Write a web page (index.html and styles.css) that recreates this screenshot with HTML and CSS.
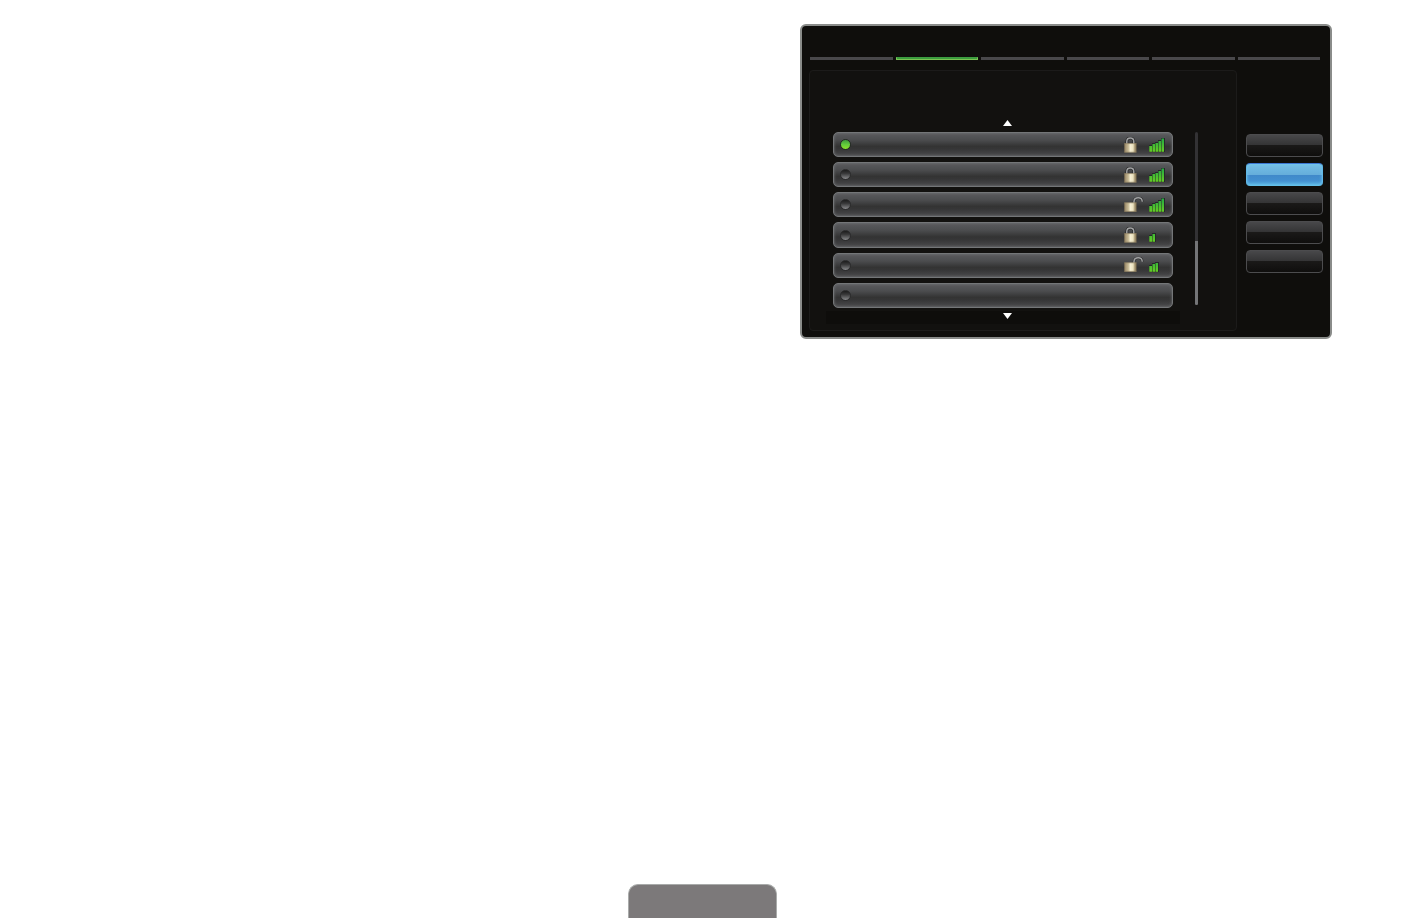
FILE: index.html
```html
<!DOCTYPE html>
<html lang="en">
<head>
  <meta charset="UTF-8">
  <title>Wireless Network</title>
  <link rel="stylesheet" href="styles.css">
</head>
<body>
  <!-- shared icon parts -->
  <svg class="defs" width="0" height="0" aria-hidden="true">
    <defs>
      <linearGradient id="brass" x1="0" x2="1" y1="0" y2="0">
        <stop offset="0" stop-color="#8d7c5c"/>
        <stop offset="0.2" stop-color="#b5a684"/>
        <stop offset="0.32" stop-color="#c4b792"/>
        <stop offset="0.5" stop-color="#f6efd4"/>
        <stop offset="0.72" stop-color="#ece3c0"/>
        <stop offset="0.87" stop-color="#a3936f"/>
        <stop offset="1" stop-color="#837353"/>
      </linearGradient>
      <linearGradient id="green" x1="0" x2="0" y1="0" y2="14" gradientUnits="userSpaceOnUse">
        <stop offset="0" stop-color="#22a843"/>
        <stop offset="1" stop-color="#66cf24"/>
      </linearGradient>
    </defs>
    <symbol id="locked" viewBox="0 0 20 16">
      <path d="M2.8 7V4.6C2.8 2 4.3 1 6.3 1s3.5 1 3.5 3.6V7" fill="none" stroke="#222" stroke-width="2.6"/>
      <path d="M2.8 7V4.6C2.8 2 4.3 1 6.3 1s3.5 1 3.5 3.6V7" fill="none" stroke="#a2a3a4" stroke-width="1.5"/>
      <rect x="0.3" y="6.4" width="12.2" height="9" fill="url(#brass)"/>
      <path d="M0.3 6.6h12.2M0.3 15.2h12.2" stroke="#8f8060" stroke-width="0.6"/>
    </symbol>
    <symbol id="unlocked" viewBox="0 0 20 16">
      <path d="M10 6V4.2C10.2 1.8 12 .8 14.2.8c2.4 0 4 1.400 4 4" fill="none" stroke="#222" stroke-width="2.4"/>
      <path d="M10 6V4.2C10.2 1.8 12 .8 14.2.8c2.4 0 4 1.400 4 4" fill="none" stroke="#a2a3a4" stroke-width="1.5"/>
      <rect x="0.3" y="5.6" width="12.2" height="9" fill="url(#brass)"/>
      <path d="M0.3 5.8h12.2M0.3 14.4h12.2" stroke="#8f8060" stroke-width="0.6"/>
    </symbol>
    <symbol id="signal2" viewBox="0 0 16 14">
      <path d="M0 7h3V5h4v9H0z" fill="#26272a"/>
      <path d="M.3 8H3v5.700H.3zM3.500 6H6v7.700H3.500z" fill="url(#green)"/>
    </symbol>
    <symbol id="signal3" viewBox="0 0 16 14">
      <path d="M0 7h3V5h3V4h4v10H0z" fill="#26272a"/>
      <path d="M.3 8H3v5.700H.3zM3.500 6H6v7.700H3.500zM6.500 5H9v8.700H6.500z" fill="url(#green)"/>
    </symbol>
    <symbol id="signal5" viewBox="0 0 16 14">
      <path d="M0 7h3V5h3V4h3V2h3V0h4v14H0z" fill="#26272a"/>
      <path d="M.3 8H3v5.700H.3zM3.500 6H6v7.700H3.500zM6.500 5H9v8.700H6.500zM9.500 3H12v10.700H9.500zM12.500.5H15v13.200h-2.500z" fill="url(#green)"/>
    </symbol>
  </svg>

  <div class="page">
    <section class="screen" aria-label="Network settings">
      <nav class="tabs">
        <a href="#" aria-label="Tab 1"></a>
        <a href="#" class="active" aria-label="Tab 2"></a>
        <a href="#" aria-label="Tab 3"></a>
        <a href="#" aria-label="Tab 4"></a>
        <a href="#" aria-label="Tab 5"></a>
        <a href="#" aria-label="Tab 6"></a>
      </nav>

      <div class="content">
        <div class="panel">
          <div class="chooser">
            <button class="arrow up" type="button" aria-label="Scroll up"><svg width="9" height="6"><path d="M4.500 0L9 6H0z" fill="#fff"/></svg></button>
            <div class="networks">
              <label class="network">
                <input type="radio" name="network" aria-label="Network 1" checked>
                <svg class="lock"><use href="#locked"/></svg>
                <svg class="signal"><use href="#signal5"/></svg>
              </label>
              <label class="network">
                <input type="radio" name="network" aria-label="Network 2">
                <svg class="lock"><use href="#locked"/></svg>
                <svg class="signal"><use href="#signal5"/></svg>
              </label>
              <label class="network">
                <input type="radio" name="network" aria-label="Network 3">
                <svg class="lock"><use href="#unlocked"/></svg>
                <svg class="signal"><use href="#signal5"/></svg>
              </label>
              <label class="network">
                <input type="radio" name="network" aria-label="Network 4">
                <svg class="lock"><use href="#locked"/></svg>
                <svg class="signal"><use href="#signal2"/></svg>
              </label>
              <label class="network">
                <input type="radio" name="network" aria-label="Network 5">
                <svg class="lock"><use href="#unlocked"/></svg>
                <svg class="signal"><use href="#signal3"/></svg>
              </label>
              <label class="network">
                <input type="radio" name="network" aria-label="Network 6">
              </label>
            </div>
            <button class="arrow down" type="button" aria-label="Scroll down"><svg width="9" height="6"><path d="M0 0h9L4.500 6z" fill="#fff"/></svg></button>
          </div>
          <div class="scrollbar"><div class="thumb"></div></div>
        </div>

        <div class="actions">
          <button type="button" aria-label="Action 1"></button>
          <button type="button" class="selected" aria-label="Action 2"></button>
          <button type="button" aria-label="Action 3"></button>
          <button type="button" aria-label="Action 4"></button>
          <button type="button" aria-label="Action 5"></button>
        </div>
      </div>
    </section>
  </div>

  <footer class="page-tab"></footer>
</body>
</html>
```
FILE: styles.css
```css
* {
  box-sizing: border-box;
}

body {
  margin: 0;
  min-height: 100vh;
  display: flex;
  flex-direction: column;
  background: #fff;
  font-family: "Liberation Sans", Arial, sans-serif;
}

button {
  padding: 0;
  border: 0;
  background: none;
  cursor: pointer;
}

.defs {
  position: absolute;
}

.page {
  display: grid;
  grid-template-columns: 26fr 19fr;
  padding: 24px 72px;
}

/* TV screen */
.screen {
  grid-column: 2;
  border: 2px solid #8a8c8a;
  border-radius: 6px;
  background: #0f0e0c;
}

.tabs {
  display: grid;
  grid-template-columns: repeat(6, 1fr);
  gap: 3px;
  padding: 31px 10px 0 8px;
}

.tabs a {
  height: 3px;
  background: #49484b;
}

.tabs a.active {
  background: #3c9d3f;
  border: 1px solid #7cc455;
  border-top-color: #3c9d3f;
}

.content {
  display: flex;
  gap: 9px;
  padding: 10px 7px 6px;
}

.panel {
  flex: 1;
  display: flex;
  gap: 22px;
  padding: 0 38px 6px 23px;
  border: 1px solid #1c1b1a;
  border-radius: 4px;
  background: #12110f;
}

.chooser {
  flex: 1;
  display: flex;
  flex-direction: column;
}

.arrow {
  display: flex;
  justify-content: center;
  padding-left: 8px;
}

.arrow.up {
  height: 61px;
  align-items: flex-end;
  padding-bottom: 6px;
}

.arrow.down {
  height: 13px;
  padding-top: 2px;
  margin: 3px -7px 0;
  background: #0e0d0b;
}

.networks {
  display: grid;
  grid-template-rows: repeat(6, 1fr);
  gap: 5px;
  height: 176px;
}

.network {
  display: flex;
  align-items: center;
  gap: 5px;
  padding: 0 7px 0 6px;
  border: 1px solid #747678;
  border-radius: 5px;
  background: linear-gradient(#5a5b5e, #4c4d4f 30%, #333 58%, #363637 70%, #4b4b4d);
  box-shadow: inset 0 0 3px #737577;
}

.network input {
  appearance: none;
  width: 11px;
  height: 11px;
  margin: 0 auto 0 0;
  border: 1px solid #2b2b2c;
  border-radius: 50%;
  background: linear-gradient(#1c1c1c, #3a3a3b 40%, #87888a);
}

.network input:checked {
  border-color: #232b22;
  background: linear-gradient(#3f9a3c, #62cb3c 50%, #8be02a);
}

.lock {
  width: 20px;
  height: 16px;
}

.signal {
  width: 16px;
  height: 14px;
}

.scrollbar {
  display: flex;
  align-items: flex-end;
  width: 3px;
  margin: 61px 0 19px;
  border-radius: 2px;
  background: #333234;
}

.thumb {
  width: 100%;
  height: 37%;
  border-radius: 0 0 2px 2px;
  background: #747577;
}

/* side buttons */
.actions {
  display: flex;
  flex-direction: column;
  gap: 6px;
  width: 77px;
  padding-top: 64px;
}

.actions button {
  height: 23px;
  border: 1px solid #4c4c4e;
  border-radius: 4px;
  background: linear-gradient(#48484a, #343435 48%, #1a1918 50%, #0f0e0d);
}

.actions .selected {
  border-color: #3c78d4 #62b8e8 #62bfe9;
  background: linear-gradient(#75bfe6, #66aedb 50%, #4089ca 54%, #4390d0 80%, #58b0e0);
  box-shadow: inset 0 0 3px #6fcdf2;
}

.page-tab {
  width: 149px;
  height: 34px;
  margin: auto auto 0;
  border: 1px solid #a9abaa;
  border-bottom: 0;
  border-radius: 10px 10px 0 0;
  background: #7c797a;
}
```
